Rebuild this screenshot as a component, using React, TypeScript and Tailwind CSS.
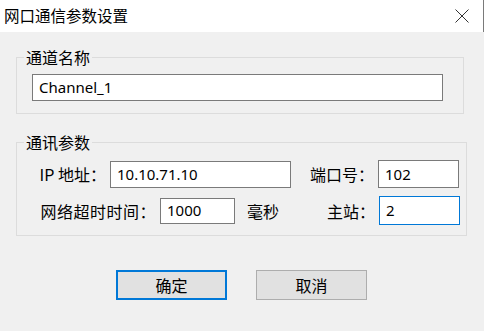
import React from 'react';

const cjk = "font-['Noto_Sans_CJK_SC','Noto_Sans',sans-serif]";
const latin = "font-['Noto_Sans','Noto_Sans_CJK_SC',sans-serif]";

function TextBox({ value, className }: { value: string; className: string }) {
    return (
        <div className={`flex items-center bg-white border px-[6px] text-[15px] leading-none text-black ${latin} ${className}`}>
            {value}
        </div>
    );
}

export default function App() {
    return (
        <div className={`w-[484px] h-[331px] flex flex-col bg-[#f0f0f0] text-black ${cjk}`}>
            {/* Title bar */}
            <div className="h-[32px] shrink-0 bg-white flex items-center justify-between pl-[4px] border-r border-[#7a7a7a]">
                <span className="text-[15.5px] leading-none">网口通信参数设置</span>
                <svg className="w-[14px] h-[14px] mr-[14px]" viewBox="0 0 14 14" fill="none" stroke="#333" strokeWidth={1}>
                    <path d="M0.5 0.5L13.5 13.5M13.5 0.5L0.5 13.5" />
                </svg>
            </div>

            {/* Body */}
            <div className="flex-1 flex flex-col pl-[16px]">
                {/* 通道名称 */}
                <fieldset className="mt-[15px] w-[448px] border border-[#dcdcdc] pb-[12px]">
                    <legend className="ml-[7px] px-[2px] text-[16px] leading-[20px]">通道名称</legend>
                    <TextBox value="Channel_1" className="mt-[7px] ml-[15px] w-[411px] h-[27px] border-[#7a7a7a]" />
                </fieldset>

                {/* 通讯参数 */}
                <fieldset className="mt-[18px] w-[451px] border border-[#dcdcdc] pb-[10px]">
                    <legend className="ml-[7px] px-[2px] text-[16px] leading-[20px]">通讯参数</legend>
                    <div className="mt-[8px] h-[28px] flex items-center text-[16px] leading-none">
                        <span className="w-[93px] text-right pr-[4px]">IP 地址：</span>
                        <TextBox value="10.10.71.10" className="w-[181px] h-[27px] border-[#7a7a7a]" />
                        <span className="w-[87px] text-right pr-[4px]">端口号：</span>
                        <TextBox value="102" className="w-[81px] h-[28px] border-[#7a7a7a]" />
                    </div>
                    <div className="mt-[8px] h-[29px] flex items-center text-[16px] leading-none">
                        <span className="w-[143px] text-right pr-[4px] tracking-[0.5px]">网络超时时间：</span>
                        <TextBox value="1000" className="w-[75px] h-[26px] border-[#7a7a7a]" />
                        <span className="ml-[12px] w-[32px]">毫秒</span>
                        <span className="w-[100px] text-right pr-[4px]">主站：</span>
                        <TextBox value="2" className="w-[81px] h-[29px] border-[#0078d7]" />
                    </div>
                </fieldset>

                {/* Buttons */}
                <div className="mt-[34px] ml-[100px] flex gap-[29px]">
                    <button className="w-[111px] h-[30px] bg-[#e1e1e1] border-2 border-[#0078d7] text-[16px] leading-none">
                        确定
                    </button>
                    <button className="w-[111px] h-[30px] bg-[#e1e1e1] border border-[#adadad] text-[16px] leading-none">
                        取消
                    </button>
                </div>
            </div>
        </div>
    );
}
